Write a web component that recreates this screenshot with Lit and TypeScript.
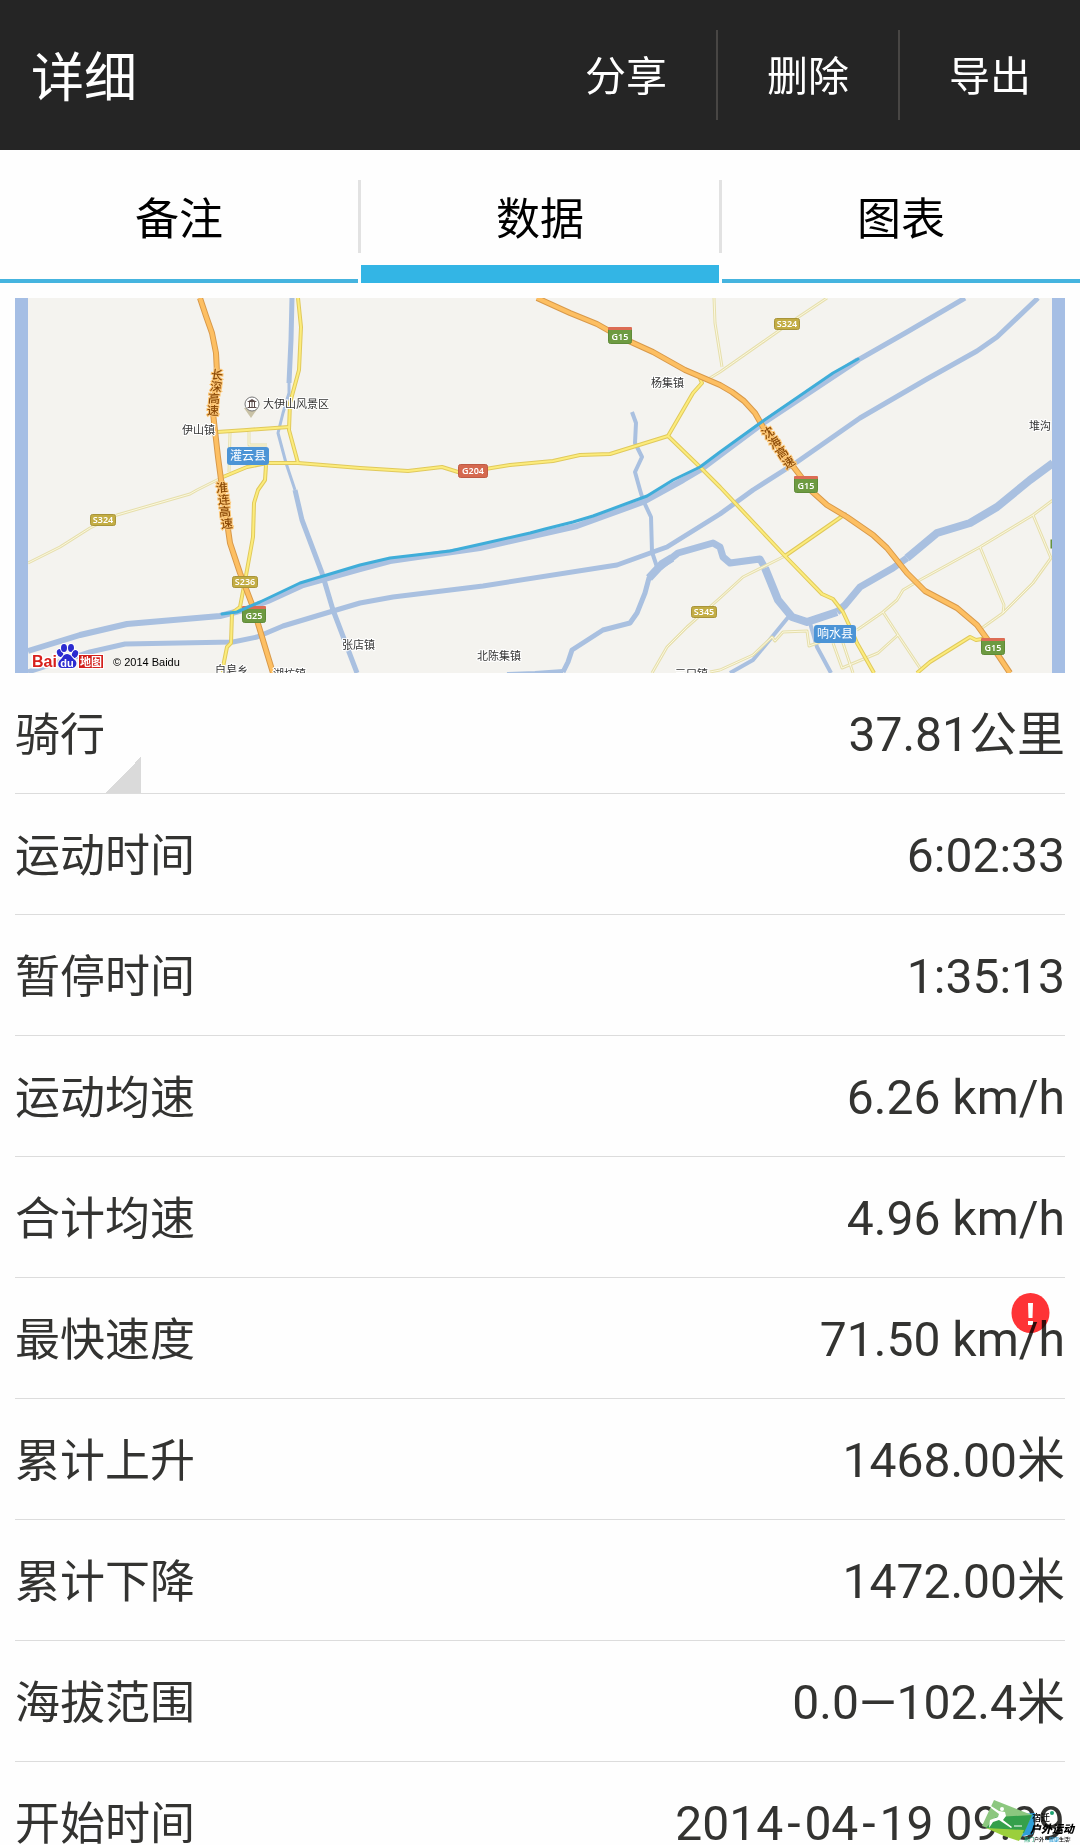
import { LitElement, html, svg, css } from "lit";
import { customElement, property, state } from "lit/decorators.js";
import { classMap } from "lit/directives/class-map.js";

interface Row {
  label: string;
  value: string;
  picker?: boolean;
  alert?: boolean;
}

const ROWS: Row[] = [
  { label: "骑行", value: "37.81公里", picker: true },
  { label: "运动时间", value: "6:02:33" },
  { label: "暂停时间", value: "1:35:13" },
  { label: "运动均速", value: "6.26 km/h" },
  { label: "合计均速", value: "4.96 km/h" },
  { label: "最快速度", value: "71.50 km/h", alert: true },
  { label: "累计上升", value: "1468.00米" },
  { label: "累计下降", value: "1472.00米" },
  { label: "海拔范围", value: "0.0—102.4米" },
  { label: "开始时间", value: "2014-04-19 09:09" },
];

/* Map geometry, in the coordinate space of the map's viewBox. */
const RIVERS: Array<[number, string]> = [
  [5, "292,298 291,340 289,383"],
  [3, "289,383 289,393 283,413 278,433 286,463 295,490"],
  [5, "295,490 302,520 322,573 333,610 357,673"],
  [6, "28,651 80,635 127,624 220,616 243,610 268,601 303,585 360,569 390,561 480,548 577,526 643,502 683,480 700,470 720,455 763,423 858,360"],
  [5, "858,360 907,332 965,298"],
  [5, "28,672 90,652 125,644 233,642 257,637 283,626 333,611 360,603 393,597 483,586 617,565 653,552 667,547 720,514 753,490 797,462 860,418 927,379 977,351 997,337 1038,298"],
  [4, "632,412 636,423 635,443 642,457 635,472 640,490 643,500 651,517 652,552 658,570"],
  [4, "507,674 535,673 563,671"],
  [5, "563,672 568,662 572,650 603,630 630,623 637,613 645,593 649,578 660,567"],
  [7, "660,567 678,553 713,543 720,547 723,557 730,563 760,559 765,568"],
  [8, "765,568 778,600 792,617 807,622 837,612"],
  [8, "649,578 662,564 672,558"],
  [7, "837,612 845,605 860,587 893,568 907,558"],
  [8, "907,558 937,533 970,523 997,507 1030,480 1053,463"],
  [4, "790,615 772,637 753,660 730,673"],
  [4, "810,623 817,647 831,673"],
];

const LANES = [
  "223,477 197,490 190,494 117,515 90,528 60,547 28,563",
  "230,433 229,472",
  "249,432 249,445 267,445",
  "785,556 775,561 743,577 720,598 687,627 667,647 652,673",
  "827,298 797,318 720,372 705,381",
  "714,298 715,323 722,367",
  "1053,500 1033,515 980,547 920,580 903,590 897,600 883,612 857,630",
  "1033,515 1051,558 1033,583 1003,613 982,628",
  "980,547 1004,605 1003,613",
  "883,612 898,635 920,668",
  "898,635 878,653 842,668 833,643",
  "842,640 853,673",
  "720,670 753,655 772,637 775,641 783,632 807,631 809,646 820,642",
  "710,672 720,670",
];

const ROADS = [
  "298,298 301,327 299,370 290,403 289,430 298,463",
  "217,432 247,430 289,427",
  "223,477 247,467 267,463 298,463 360,468 408,471 442,467 458,472 473,471 510,465 553,461 580,455 610,454 668,436 693,393 702,383 698,374",
  "266,465 265,480 258,490 254,503 253,537 247,570 240,607 232,613 231,643 227,647 223,667 223,673",
  "668,436 700,467 720,487 785,556 822,594 833,599 843,612 850,627 857,643 874,673",
  "785,556 841,517 847,514",
  "917,673 930,662 970,637 976,640 988,638",
];

const MOTORWAYS = [
  "200,298 206,316 212,333 216,353 217,373 213,413 218,457 222,487 230,543 240,573 253,607 273,673",
  "537,298 570,313 597,324 620,337 653,352 685,370 720,385 732,392 744,401 755,413 763,427 802,478 807,487 827,505 847,517 873,535 887,548 907,573 925,591 957,608 977,625 990,643 1010,673",
];

const TRACK =
  "222,614 237,612 260,602 300,583 360,565 390,558 416,555 450,551 477,545 530,533 545,529 573,522 593,516 647,496 673,480 700,467 720,452 763,421 833,373 858,359";

const PLACES: Array<[number, number, string]> = [
  [263, 408, "大伊山风景区"],
  [182, 434, "伊山镇"],
  [651, 387, "杨集镇"],
  [1029, 430, "堆沟"],
  [342, 649, "张店镇"],
  [477, 660, "北陈集镇"],
  [215, 674, "白皂乡"],
  [273, 678, "湖坊镇"],
  [675, 678, "三口镇"],
];

const SHIELDS: Array<[string, number, number, number, number, string]> = [
  ["province", 90, 514, 26, 12, "S324"],
  ["province", 774, 318, 26, 12, "S324"],
  ["province", 232, 576, 26, 12, "S236"],
  ["province", 691, 606, 26, 12, "S345"],
  ["nation", 458, 464, 30, 14, "G204"],
  ["express", 608, 327, 24, 17, "G15"],
  ["express", 794, 476, 24, 17, "G15"],
  ["express", 981, 638, 24, 17, "G15"],
  ["express", 242, 606, 24, 17, "G25"],
];

const ROAD_NAMES: Array<[number, number, number, string]> = [
  [217, 375, 8, "长"], [216, 387, 8, "深"], [214, 399, 4, "高"], [213, 411, 2, "速"],
  [222, 488, -5, "淮"], [224, 500, -5, "连"], [225, 512, -5, "高"], [227, 524, -5, "速"],
  [768, 433, -32, "沈"], [775, 443, -32, "海"], [782, 453, -32, "高"], [789, 463, -32, "速"],
];

@customElement("route-map")
export class RouteMap extends LitElement {
  static styles = css`
    :host {
      display: block;
    }
    .map {
      display: block;
      width: 100%;
      height: auto;
      font-family: "Noto Sans CJK SC", sans-serif;
    }
    .land { fill: #f4f3ef; }
    .sea { fill: #a5bee4; }
    polyline { fill: none; stroke-linejoin: round; }
    .river { stroke: #a9c0e0; }
    .lane-edge { stroke: #e6dfac; stroke-width: 3; }
    .lane { stroke: #fbf8e0; stroke-width: 1; }
    .road-edge { stroke: #e0c95c; stroke-width: 4; }
    .road { stroke: #fcec7c; stroke-width: 2; }
    .motorway-edge { stroke: #d8994a; stroke-width: 6; }
    .motorway { stroke: #fdbf62; stroke-width: 4; }
    .track { stroke: #3fadd9; stroke-width: 3; stroke-linecap: round; }
    .place {
      font-size: 11px;
      fill: #333;
      stroke: #fff;
      stroke-width: 2px;
      paint-order: stroke;
    }
    .road-name {
      font-size: 12px;
      font-weight: 500;
      fill: #8b4a08;
      stroke: #fdc878;
      stroke-width: 2px;
      paint-order: stroke;
      text-anchor: middle;
    }
    .shield {
      font-family: "Noto Sans", sans-serif;
      font-size: 9px;
      font-weight: 600;
      fill: #fff;
      text-anchor: middle;
    }
    .province { fill: #c3ad44; stroke: #a8943a; }
    .nation { fill: #d5694f; stroke: #bf5a44; }
    .express { fill: #6d9a41; stroke: #5f8b38; }
    .express-top { fill: #dc6c54; }
    .county { fill: #4c94d6; }
    .county-name { font-size: 12px; fill: #fff; text-anchor: middle; }
    .brand {
      font-family: "Liberation Sans", sans-serif;
      font-size: 16px;
      font-weight: 700;
      fill: #d8201c;
      stroke: #fff;
      stroke-width: 3px;
      paint-order: stroke;
    }
    .paw { fill: #2b2bd0; stroke: #fff; stroke-width: 2px; paint-order: stroke; }
    .paw-text {
      font-family: "Liberation Sans", sans-serif;
      font-size: 11px;
      font-weight: 700;
      fill: #fff;
      text-anchor: middle;
    }
    .brand-box { fill: #d3201c; stroke: #fff; stroke-width: 2px; paint-order: stroke; }
    .brand-map { font-size: 11px; font-weight: 700; fill: #fff; text-anchor: middle; }
    .copyright {
      font-family: "Liberation Sans", sans-serif;
      font-size: 11px;
      fill: #000;
    }
    .pin-ring { fill: #fff; stroke: #777; }
    .pin-tip { fill: #c9c2a6; }
    .pin-roof { fill: #5a4a48; }
    .pin-icon { fill: none; stroke: #5a4a48; }
  `;

  private line(cls: string, points: string) {
    return svg`<polyline class=${cls} points=${points}></polyline>`;
  }

  render() {
    return html`
      <svg class="map" viewBox="15 298 1050 375" role="img" aria-label="大伊山风景区">
        <rect class="land" x="15" y="298" width="1050" height="375"></rect>
        ${RIVERS.map(([w, p]) => svg`<polyline class="river" stroke-width=${w} points=${p}></polyline>`)}
        ${LANES.map((p) => this.line("lane-edge", p))}
        ${LANES.map((p) => this.line("lane", p))}
        ${ROADS.map((p) => this.line("road-edge", p))}
        ${ROADS.map((p) => this.line("road", p))}
        ${MOTORWAYS.map((p) => this.line("motorway-edge", p))}
        ${MOTORWAYS.map((p) => this.line("motorway", p))}
        ${ROAD_NAMES.map(
          ([x, y, r, t]) => svg`<text class="road-name" transform="translate(${x} ${y}) rotate(${r})" y="4">${t}</text>`
        )}
        <g>
          <path class="pin-tip" d="M244 408 L251 418 L258 408 Z"></path>
          <circle class="pin-ring" cx="252" cy="404" r="7"></circle>
          <path class="pin-roof" d="M247 402 L252 399 L257 402 Z"></path>
          <path class="pin-icon" d="M247.500 407.500 H256.500 M249.500 402 V407 M252 402 V407 M254.500 402 V407"></path>
        </g>
        ${PLACES.map(([x, y, t]) => svg`<text class="place" x=${x} y=${y}>${t}</text>`)}
        <rect class="county" x="227" y="447" width="42" height="18" rx="3"></rect>
        <text class="county-name" x="248" y="460">灌云县</text>
        <rect class="county" x="814" y="625" width="42" height="18" rx="3"></rect>
        <text class="county-name" x="835" y="638">响水县</text>
        ${SHIELDS.map(
          ([kind, x, y, w, h, t]) => svg`
            <rect class=${kind} x=${x + 0.5} y=${y + 0.5} width=${w - 1} height=${h - 1} rx="2"></rect>
            ${kind === "express" ? svg`<rect class="express-top" x=${x} y=${y} width=${w} height="3" rx="1"></rect>` : ""}
            <text class="shield" x=${x + w / 2} y=${kind === "express" ? y + 13 : y + h / 2 + 3}>${t}</text>`
        )}
        ${this.line("track", TRACK)}
        <rect class="express" x="1051" y="540" width="2" height="8"></rect>
        <rect class="sea" x="15" y="298" width="13" height="375"></rect>
        <rect class="sea" x="1052" y="298" width="13" height="375"></rect>
        <text class="brand" x="32" y="667">Bai</text>
        <rect class="brand-box" x="79" y="655" width="24" height="13"></rect>
        <text class="brand-map" x="91" y="666">地图</text>
        <g class="paw">
          <ellipse cx="60" cy="653" rx="3" ry="4" transform="rotate(-20 60 653)"></ellipse>
          <ellipse cx="64" cy="648" rx="3" ry="4"></ellipse>
          <ellipse cx="71" cy="648" rx="3" ry="4"></ellipse>
          <ellipse cx="75" cy="654" rx="3" ry="4" transform="rotate(20 75 654)"></ellipse>
          <path d="M67 654 C71 654 72 658 75 660 C78 663 76 668 72 668 H62 C58 668 57 663 60 660 C63 658 63 654 67 654 Z"></path>
        </g>
        <text class="paw-text" x="67" y="667">du</text>
        <text class="copyright" x="113" y="666">© 2014 Baidu</text>
      </svg>
    `;
  }
}

@customElement("data-row")
export class DataRow extends LitElement {
  @property({ attribute: false }) row!: Row;

  static styles = css`
    :host {
      display: block;
    }
    .row {
      display: flex;
      justify-content: space-between;
      align-items: center;
      height: 120px;
      border-bottom: 1px solid #dcdcdc;
      color: #333331;
    }
    .label {
      display: flex;
      align-items: center;
      align-self: stretch;
      margin: 0;
      padding: 0 0 4px;
      border: 0;
      background: none;
      color: inherit;
      font: inherit;
      font-size: 45px;
      text-align: left;
    }
    .picker {
      width: 126px;
      background: linear-gradient(135deg, transparent 50%, #dadada 50%) right bottom / 36px 36px no-repeat;
    }
    .value {
      position: relative;
      padding-top: 4px;
      font-size: 48px;
      line-height: 58px;
    }
    .hyphen {
      padding: 0 4px;
    }
    .alert {
      position: absolute;
      top: -14px;
      right: 15px;
      width: 39px;
      height: 40px;
      mix-blend-mode: multiply;
    }
  `;

  render() {
    const { label, value, picker, alert } = this.row;
    const parts = value.split("-");
    return html`
      <div class="row">
        ${picker
          ? html`<button class="label picker" type="button">${label}</button>`
          : html`<span class="label">${label}</span>`}
        <span class="value">
          ${parts.map((part, i) => (i ? html`<span class="hyphen">-</span>${part}` : part))}${alert
            ? html`<svg class="alert" viewBox="0 0 39 40" aria-hidden="true">
                <ellipse cx="19.500" cy="20" rx="19" ry="20" fill="#ff3336"></ellipse>
                <path d="M17 10 H22 L21.500 25 H17.500 Z M17 28 H22 V32 H17 Z" fill="#fff"></path>
              </svg>`
            : ""}
        </span>
      </div>
    `;
  }
}

@customElement("club-mark")
export class ClubMark extends LitElement {
  static styles = css`
    :host {
      display: block;
    }
    .mark {
      display: block;
      width: 100%;
      height: auto;
      overflow: visible;
      font-family: "Noto Sans CJK SC", sans-serif;
    }
    .city { font-size: 9px; font-weight: 500; }
    .name { font-size: 11px; font-weight: 900; font-style: italic; }
    .tag { font-size: 5px; font-weight: 500; }
  `;

  render() {
    return html`
      <svg class="mark" viewBox="0 0 92 42" aria-hidden="true">
        <path d="M38 14 L53 13 L51 34 L32 38 Z" fill="#2f9fd8"></path>
        <path d="M12 0 L50 15 L38 40 L0 26 Z" fill="#8cc77f"></path>
        <path d="M14 17 L50 15 L42 33 L4 28 Z" fill="#35a04b"></path>
        <path d="M4 28 L42 30 L37 41 L22 36 Z" fill="#9bcf3c"></path>
        <circle cx="20" cy="9" r="2" fill="#fff"></circle>
        <path d="M9 6 L17 11 L23 12 L24 16 L21 20 L30 27 L29 28 L17 20 L11 22 L7 28 L8 20 L16 17 L17 14 L9 8 Z" fill="#fff"></path>
        <path d="M32 26 H40" stroke="#fff" stroke-width="1"></path>
        <circle cx="70" cy="13" r="2" fill="#1ba070"></circle>
        <text class="city" x="50" y="21">宿迁</text>
        <text class="name" x="48" y="33">户外运动</text>
        <text class="tag" x="42" y="41"><tspan fill="#1ba070">热门</tspan>户外<tspan fill="#2f9fd8">·健康</tspan>生活!</text>
      </svg>
    `;
  }
}

@customElement("app-root")
export class AppRoot extends LitElement {
  @state() private tab = 1;

  private tabs = ["备注", "数据", "图表"];
  private actions = ["分享", "删除", "导出"];

  static styles = css`
    :host {
      display: flex;
      flex-direction: column;
      position: relative;
      height: 100vh;
      overflow: hidden;
      background: #fefefe;
      font-family: Roboto, "Noto Sans CJK SC", sans-serif;
    }
    button {
      margin: 0;
      padding: 0;
      border: 0;
      background: none;
      font: inherit;
    }
    .bar {
      display: flex;
      flex: none;
      align-items: center;
      height: 150px;
      background: #252525;
      color: #fff;
    }
    .title {
      flex: 1;
      margin: 0;
      padding: 0 0 2px 31px;
      font-size: 53px;
      font-weight: 400;
    }
    .actions {
      display: flex;
    }
    .action {
      box-sizing: border-box;
      width: 182px;
      height: 90px;
      padding-bottom: 4px;
      border-left: 2px solid #484644;
      color: #fff;
      font-size: 41px;
    }
    .action:first-child {
      border-left-color: transparent;
    }
    .tabs {
      display: grid;
      flex: none;
      grid-template-columns: repeat(3, 1fr);
      gap: 3px;
      height: 133px;
    }
    .tab {
      position: relative;
      box-sizing: border-box;
      padding-top: 2px;
      border-bottom: 4px solid #45b4df;
      color: #000;
      font-size: 44px;
    }
    .tab.active {
      border-bottom: 18px solid #33b5e5;
      padding-top: 16px;
    }
    .tab + .tab::before {
      content: "";
      position: absolute;
      left: -3px;
      top: 30px;
      width: 3px;
      height: 73px;
      background: #e2e2e2;
    }
    .page {
      flex: 1;
      min-height: 0;
      padding: 15px 15px 0;
      overflow: auto;
      scrollbar-width: none;
    }
    .mark {
      position: absolute;
      right: 6px;
      bottom: 3px;
      width: 92px;
    }
  `;

  render() {
    return html`
      <header class="bar">
        <h1 class="title">详细</h1>
        <div class="actions">
          ${this.actions.map((a) => html`<button class="action" type="button">${a}</button>`)}
        </div>
      </header>
      <nav class="tabs" role="tablist">
        ${this.tabs.map(
          (t, i) => html`<button
            type="button"
            role="tab"
            aria-selected=${i === this.tab ? "true" : "false"}
            class=${classMap({ tab: true, active: i === this.tab })}
            @click=${() => (this.tab = i)}
          >${t}</button>`
        )}
      </nav>
      <main class="page">
        <route-map></route-map>
        ${ROWS.map((row) => html`<data-row .row=${row}></data-row>`)}
      </main>
      <club-mark class="mark"></club-mark>
    `;
  }
}
